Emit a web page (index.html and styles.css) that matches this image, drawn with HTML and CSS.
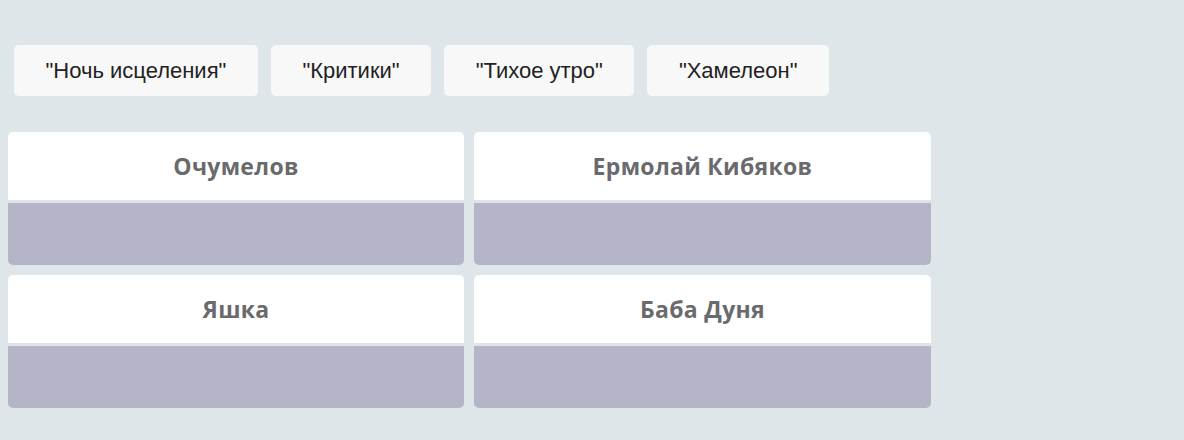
FILE: index.html
```html
<!DOCTYPE html>
<html lang="ru">
<head>
<meta charset="utf-8">
<link rel="stylesheet" href="styles.css">
</head>
<body>
<div class="tabs">
  <button class="tab">"Ночь исцеления"</button>
  <button class="tab">"Критики"</button>
  <button class="tab">"Тихое утро"</button>
  <button class="tab">"Хамелеон"</button>
</div>
<div class="grid">
  <div class="card"><div class="name">Очумелов</div><div class="body"></div></div>
  <div class="card"><div class="name">Ермолай Кибяков</div><div class="body"></div></div>
  <div class="card"><div class="name">Яшка</div><div class="body"></div></div>
  <div class="card"><div class="name">Баба Дуня</div><div class="body"></div></div>
</div>
</body>
</html>
```
FILE: styles.css
```css
html, body {
  margin: 0;
  padding: 0;
  background: #dfe6e9;
  height: 100%;
}
body {
  padding: 45px 8px 0 8px;
  box-sizing: border-box;
}
.tabs {
  display: flex;
  gap: 13px;
  padding-left: 6px;
}
.tab {
  font-family: "Liberation Sans", Arial, sans-serif;
  font-size: 22px;
  line-height: 25px;
  color: #222;
  background: #f8f8f8;
  border: none;
  border-radius: 5px;
  padding: 13px 31.5px 13px 31.5px;
  height: 51px;
}
.grid {
  margin-top: 36px;
  width: 923px;
  display: grid;
  grid-template-columns: 456px 457px;
  gap: 10px;
}
.card {
  border-radius: 5px;
  overflow: hidden;
  display: flex;
  flex-direction: column;
}
.name {
  background: #ffffff;
  height: 68px;
  display: flex;
  align-items: center;
  justify-content: center;
  font-family: "Open Sans", "Noto Sans", sans-serif;
  font-weight: 700;
  font-size: 23px;
  letter-spacing: 0.3px;
  color: #6a6a6d;
  border-bottom: 3px solid #dde3e8;
}
.body {
  background: #b6b5c8;
  height: 62px;
}
```
